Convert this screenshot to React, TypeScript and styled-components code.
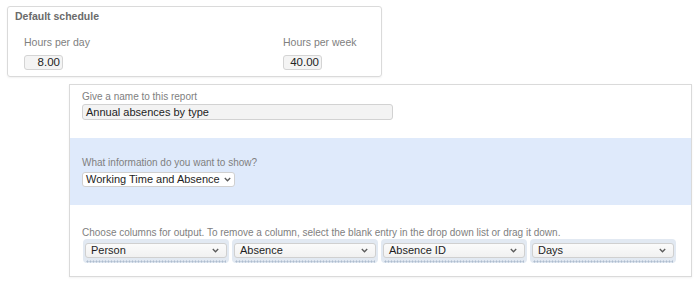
import React from 'react';
import styled, { createGlobalStyle } from 'styled-components';

const GlobalStyle = createGlobalStyle`
    body {
        margin: 0;
        background: #ffffff;
        font-family: "Liberation Sans", Arial, sans-serif;
    }
`;

const Page = styled.div`
    width: 700px;
    height: 284px;
    padding: 6px 0 0 7px;
    box-sizing: border-box;
    overflow: hidden;
`;

const SchedulePanel = styled.div`
    width: 375px;
    height: 71px;
    box-sizing: border-box;
    border: 1px solid #dadada;
    border-radius: 3px;
    box-shadow: 0 1px 2px rgba(0, 0, 0, 0.06);
    padding: 3px 7px 0 7px;
`;

const PanelTitle = styled.div`
    font-size: 10.5px;
    line-height: 13px;
    font-weight: bold;
    color: #6b6b6b;
`;

const HoursRow = styled.div`
    display: grid;
    grid-template-columns: 259px auto;
    margin-top: 13px;
    padding-left: 9px;
`;

const Field = styled.div`
    display: flex;
    flex-direction: column;
    align-items: flex-start;
`;

const Label = styled.div<{ $size?: number }>`
    font-size: ${(p) => p.$size ?? 10}px;
    line-height: 13px;
    color: #808080;
`;

const NumberBox = styled.div`
    width: 39px;
    height: 15px;
    box-sizing: border-box;
    margin-top: 6px;
    border: 1px solid #d4d4d4;
    border-radius: 3px;
    background: #f4f4f4;
    font-size: 11.5px;
    line-height: 13px;
    color: #222;
    text-align: right;
    padding-right: 2px;
`;

const ReportPanel = styled.div`
    width: 623px;
    height: 193px;
    margin: 7px 0 0 62px;
    box-sizing: border-box;
    border: 1px solid #dadada;
    box-shadow: 0 1px 2px rgba(0, 0, 0, 0.06);
    display: flex;
    flex-direction: column;
`;

const Section = styled.div<{ $shaded?: boolean; $pad: string }>`
    padding: ${(p) => p.$pad};
    background: ${(p) => (p.$shaded ? '#dfeafb' : 'transparent')};
    display: flex;
    flex-direction: column;
    align-items: flex-start;
`;

const TextBox = styled.div`
    width: 311px;
    height: 16px;
    box-sizing: border-box;
    margin-top: 1px;
    border: 1px solid #d2d2d2;
    border-radius: 3px;
    background: #f3f3f3;
    font-size: 11px;
    line-height: 14px;
    color: #1e1e1e;
    padding-left: 3px;
`;

const SelectBox = styled.div`
    display: flex;
    align-items: center;
    justify-content: space-between;
    gap: 4px;
    height: 15px;
    box-sizing: border-box;
    border: 1px solid #d0d0d0;
    border-radius: 3px;
    background: linear-gradient(#fbfbfb, #f1f1f1);
    font-size: 11px;
    line-height: 13px;
    color: #1e1e1e;
    padding: 0 7px 0 5px;
`;

const InfoSelect = styled(SelectBox)`
    margin-top: 3px;
    padding: 0 3px 0 3px;
    background: #ffffff;
`;

const ColumnRow = styled.div`
    display: grid;
    grid-template-columns: repeat(4, 146px);
    gap: 3px;
    margin-left: 1px;
`;

const ColumnSlot = styled.div`
    height: 24px;
    box-sizing: border-box;
    padding: 4px 2px 0 2px;
    border-radius: 4px;
    background: #e2e9f2;
    display: flex;
    flex-direction: column;
`;

const Dots = styled.div`
    height: 3px;
    margin: 2px 1px 0 1px;
    background-image: radial-gradient(circle, #aebdcf 45%, transparent 50%);
    background-size: 3px 3px;
`;

const Chevron = () => (
    <svg width="7" height="5" viewBox="0 0 7 5">
        <path d="M0.8 1 L3.5 3.8 L6.2 1" fill="none" stroke="#5a5a5a" strokeWidth="1.3" />
    </svg>
);

const columns = ['Person', 'Absence', 'Absence ID', 'Days'];

export default function App() {
    return (
        <>
            <GlobalStyle />
            <Page>
                <SchedulePanel>
                    <PanelTitle>Default schedule</PanelTitle>
                    <HoursRow>
                        <Field>
                            <Label $size={10.5}>Hours per day</Label>
                            <NumberBox>8.00</NumberBox>
                        </Field>
                        <Field>
                            <Label $size={10.5}>Hours per week</Label>
                            <NumberBox>40.00</NumberBox>
                        </Field>
                    </HoursRow>
                </SchedulePanel>
                <ReportPanel>
                    <Section $pad="5px 12px 18px 12px">
                        <Label>Give a name to this report</Label>
                        <TextBox>Annual absences by type</TextBox>
                    </Section>
                    <Section $shaded $pad="18px 12px 18px 12px">
                        <Label>What information do you want to show?</Label>
                        <InfoSelect>
                            Working Time and Absence
                            <Chevron />
                        </InfoSelect>
                    </Section>
                    <Section $pad="21px 12px 0 12px">
                        <Label>Choose columns for output. To remove a column, select the blank entry in the drop down list or drag it down.</Label>
                        <ColumnRow>
                            {columns.map((c) => (
                                <ColumnSlot key={c}>
                                    <SelectBox>
                                        {c}
                                        <Chevron />
                                    </SelectBox>
                                    <Dots />
                                </ColumnSlot>
                            ))}
                        </ColumnRow>
                    </Section>
                </ReportPanel>
            </Page>
        </>
    );
}
